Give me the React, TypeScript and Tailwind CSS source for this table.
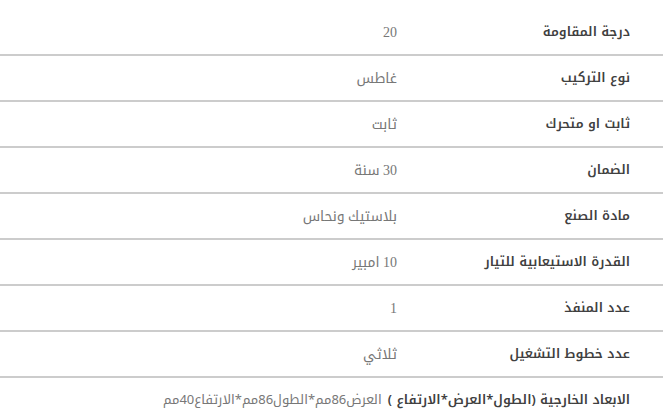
const specs: { label: string; value: string }[] = [
  { label: 'درجة المقاومة', value: '20' },
  { label: 'نوع التركيب', value: 'غاطس' },
  { label: 'ثابت او متحرك', value: 'ثابت' },
  { label: 'الضمان', value: '30 سنة' },
  { label: 'مادة الصنع', value: 'بلاستيك ونحاس' },
  { label: 'القدرة الاستيعابية للتيار', value: '10 امبير' },
  { label: 'عدد المنفذ', value: '1' },
  { label: 'عدد خطوط التشغيل', value: 'ثلاثي' },
];

const arabic = "font-['Noto_Kufi_Arabic','Noto_Sans_Arabic','DejaVu_Sans',sans-serif]";
const valueFont = "font-['Liberation_Serif','Noto_Kufi_Arabic','Noto_Sans_Arabic','DejaVu_Sans',serif]";

export default function App() {
  return (
    <div dir="rtl" className="w-[663px] bg-white pt-[10px]">
      {specs.map((s) => (
        <div key={s.label} className="flex h-[46px] items-center border-b-2 border-[#cccccc]">
          <div className={`w-[266px] shrink-0 pr-[33px] text-[13px] font-semibold text-[#404040] ${arabic}`}>
            {s.label}
          </div>
          <div className={`text-[14px] text-[#777777] ${valueFont}`}>{s.value}</div>
        </div>
      ))}
      <div className="flex h-[44px] items-center gap-[6px] pr-[33px]">
        <div className={`whitespace-nowrap text-[13px] font-semibold text-[#404040] ${arabic}`}>
          الابعاد الخارجية (الطول*العرض*الارتفاع )
        </div>
        <div className={`whitespace-nowrap text-[13px] text-[#777777] ${arabic}`}>
          العرض86مم*الطول86مم*الارتفاع40مم
        </div>
      </div>
    </div>
  );
}
